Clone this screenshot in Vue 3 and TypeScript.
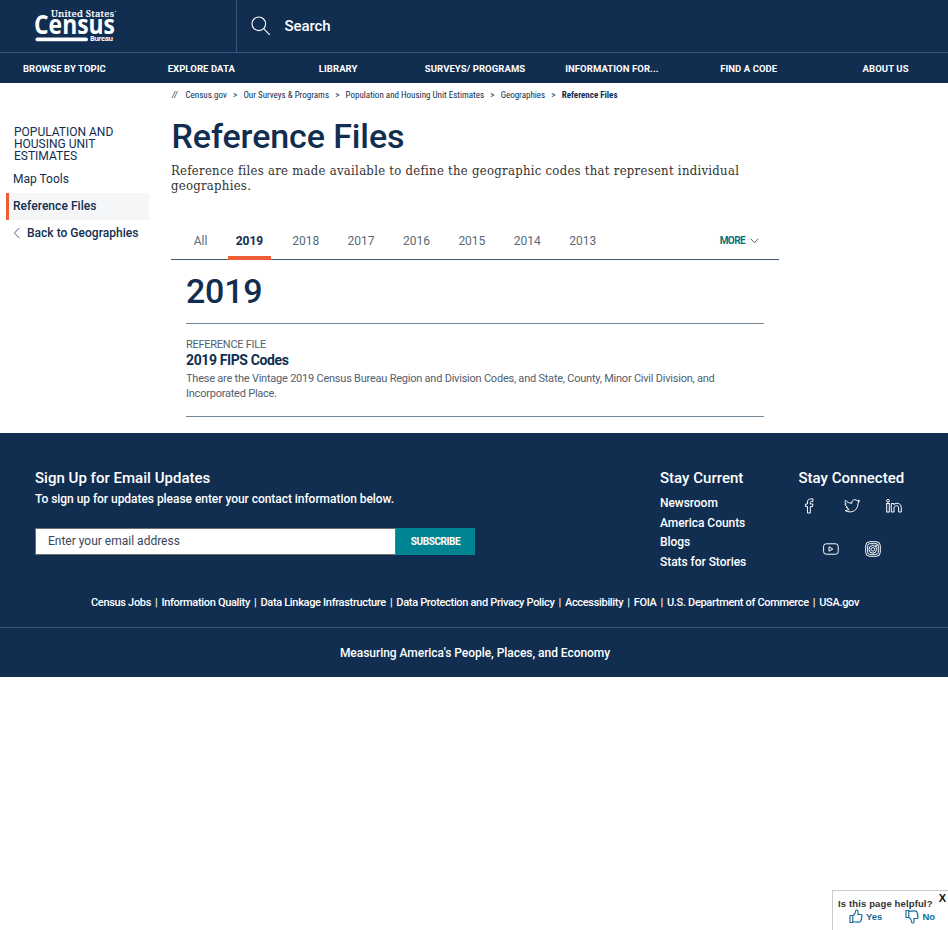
<script setup lang="ts">
const topics = ['BROWSE BY TOPIC', 'EXPLORE DATA', 'LIBRARY', 'SURVEYS/ PROGRAMS', 'INFORMATION FOR...', 'FIND A CODE', 'ABOUT US']
const crumbs = ['Census.gov', 'Our Surveys & Programs', 'Population and Housing Unit Estimates', 'Geographies']
const years = ['All', '2019', '2018', '2017', '2016', '2015', '2014', '2013']
const current = ['Newsroom', 'America Counts', 'Blogs', 'Stats for Stories']
const legal = ['Census Jobs', 'Information Quality', 'Data Linkage Infrastructure', 'Data Protection and Privacy Policy', 'Accessibility', 'FOIA', 'U.S. Department of Commerce', 'USA.gov']
</script>

<template>
  <div class="page">
    <header class="header">
      <div class="masthead">
        <a class="brand">
          <svg width="84" height="36" viewBox="0 0 84 36">
            <text class="l-top" x="16" y="9" textLength="63">United States</text>
            <text class="l-main" x="-1" y="26" textLength="81" lengthAdjust="spacingAndGlyphs">Census</text>
            <rect x="0.5" y="29.500" width="52.500" height="3.800" rx="1.900" fill="#fff" />
            <text class="l-sub" x="55" y="33.200" textLength="23">Bureau</text>
            <circle cx="80.500" cy="3.200" r=".7" fill="#a9b5c5" />
          </svg>
        </a>
        <div class="search">
          <svg width="20" height="20" viewBox="0 0 20 20" fill="none" stroke="#fff" stroke-width="1.1">
            <circle cx="7.800" cy="7.800" r="6.800" /><path d="M12.700 12.700L18.800 18.800" />
          </svg>
          <span>Search</span>
        </div>
      </div>
      <nav class="topics"><a v-for="t in topics" :key="t">{{ t }}</a></nav>
    </header>

    <div class="body">
      <aside class="side">
        <h2>POPULATION AND HOUSING UNIT ESTIMATES</h2>
        <a class="side-link">Map Tools</a>
        <a class="side-link on"><span>Reference Files</span></a>
        <a class="side-link back">
          <svg width="8" height="12" viewBox="0 0 8 12" fill="none" stroke="#47607f"><path d="M6.500 1L1.300 6l5.200 5" /></svg>
          <span>Back to Geographies</span>
        </a>
      </aside>
      <main class="main">
        <div class="crumbs">
          <span class="slashes">//</span>
          <template v-for="c in crumbs" :key="c"><a>{{ c }}</a><i>&gt;</i></template>
          <b>Reference Files</b>
        </div>
        <h1>Reference Files</h1>
        <p class="lead">Reference files are made available to define the geographic codes that represent individual<br />geographies.</p>
        <div class="tabs">
          <a v-for="y in years" :key="y" :class="{ on: y === '2019', all: y === 'All' }">{{ y }}</a>
          <div class="more"><span>MORE</span>
            <svg width="9" height="6" viewBox="0 0 9 6" fill="none" stroke="#52677f"><path d="M.8.8l3.700 4 3.700-4" /></svg>
          </div>
        </div>
        <section class="list">
          <h2>2019</h2>
          <article>
            <div class="kind">REFERENCE FILE</div>
            <h3>2019 FIPS Codes</h3>
            <p>These are the Vintage 2019 Census Bureau Region and Division Codes, and State, County, Minor Civil Division, and Incorporated Place.</p>
          </article>
        </section>
      </main>
    </div>

    <footer class="footer">
      <div class="foot-top">
        <div class="signup">
          <h4>Sign Up for Email Updates</h4>
          <p>To sign up for updates please enter your contact information below.</p>
          <div class="form"><div class="field">Enter your email address</div><button>SUBSCRIBE</button></div>
        </div>
        <div class="stay">
          <h4>Stay Current</h4>
          <a v-for="c in current" :key="c">{{ c }}</a>
        </div>
        <div class="connect">
          <h4>Stay Connected</h4>
          <div class="icons">
            <svg width="16" height="16" viewBox="0 0 16 16"><path d="M5.500 15V8.600H3.600V6h1.900V4c0-2 1.300-3.100 3.200-3.100h2.200v2.600H9.400c-.8 0-1.100.4-1.100 1.100V6h2.600l-.4 2.600H8.300V15z" /></svg>
            <svg width="16" height="16" viewBox="0 0 16 16"><path d="M1.500 2.200c1.600 1.900 3.700 3 6.300 3.100-.3-2.200 1.100-3.600 3-3.600 1 0 1.800.4 2.400 1.100l2-.8-1 1.800 1.200-.3-1.400 1.600c.1 5.100-3.300 8.800-7.900 8.800-2 0-3.700-.5-5.100-1.400 1.600.1 3-.3 4.200-1.200-1.500-.2-2.500-1-2.900-2.200h1.200C2 8.400 1.100 7.300 1 5.800l1.300.3C.9 5 .7 3.500 1.500 2.200z" /></svg>
            <svg width="16" height="16" viewBox="0 0 16 16"><rect x=".7" y="5.500" width="2.600" height="8.500" /><circle cx="2" cy="2.800" r="1.400" /><path d="M5.300 5.500h2.500v1.200c.7-.9 1.600-1.400 3-1.400 3 0 4.500 1.700 4.500 4.400V14h-2.700v-4c0-1.500-.7-2.300-2.100-2.300S8 8.600 8 10v4H5.300z" /></svg>
          </div>
          <div class="icons two">
            <svg width="16" height="16" viewBox="0 0 16 16"><rect x=".6" y="2.800" width="14.600" height="10.400" rx="2.600" /><path d="M6 5.800v4.400l3.800-2.200z" /></svg>
            <svg width="16" height="16" viewBox="0 0 16 16"><rect x=".7" y=".7" width="14.600" height="14.600" rx="4" /><rect x="2.700" y="2.700" width="10.600" height="10.600" rx="2" /><circle cx="7.800" cy="8.300" r="3.800" /><circle cx="7.800" cy="8.300" r="1.800" /><circle cx="11.400" cy="4.600" r=".7" /></svg>
          </div>
        </div>
      </div>
      <div class="legal"><template v-for="(l, i) in legal" :key="l"><i v-if="i">|</i><a>{{ l }}</a></template></div>
      <div class="motto">Measuring America's People, Places, and Economy</div>
    </footer>

    <div class="helpful">
      <b class="close">X</b>
      <div class="question">Is this page helpful?</div>
      <div class="votes">
        <a><svg width="14" height="15" viewBox="0 0 14 15"><path d="M1 6.500h2.800v7H1zM3.800 7C5.700 5.400 6.700 4 6.900 1.200c1.700-.6 2.800.9 2 4.300h3.300c1.100.2 1.100 1.600.4 2 .6.500.5 1.500-.2 1.900.5.600.2 1.500-.5 1.800.3.700-.1 1.500-1 1.700-2.900.5-5 .2-7.100-.4" /></svg><span>Yes</span></a>
        <a><svg width="14" height="15" viewBox="0 0 14 15"><path d="M1 1.500h2.800v7H1zM3.800 8c1.900 1.600 2.900 3 3.100 5.800 1.700.6 2.800-.9 2-4.300h3.300c1.100-.2 1.100-1.600.4-2 .6-.5.5-1.500-.2-1.900.5-.6.2-1.500-.5-1.800.3-.7-.1-1.500-1-1.700-2.900-.5-5-.2-7.100.4" /></svg><span>No</span></a>
      </div>
    </div>
  </div>
</template>

<style>
body { background: #fff; overflow: hidden; }
</style>

<style scoped>
* { box-sizing: border-box; }
h1, h2, h3, h4, p { margin: 0; font-weight: 500; }
.page { width: 948px; height: 930px; font-family: Roboto, "Liberation Sans", sans-serif; color: #112e51; overflow: hidden; }
.header { height: 83px; background: #112e51; color: #fff; }
.masthead { display: flex; height: 53px; border-bottom: 1px solid #3a557b; }
.brand { width: 237px; border-right: 1px solid #3a557b; padding: 8px 0 0 35px; }
.brand svg { display: block; overflow: visible; }
.l-top { font: 500 9.500px "Noto Serif", "DejaVu Serif", serif; fill: #fff; stroke: #fff; stroke-width: .2; }
.l-main { font: 700 26px "Open Sans", sans-serif; fill: #fff; }
.l-sub { font: 700 7px "Open Sans", sans-serif; fill: #fff; }
.search { display: flex; align-items: center; gap: 14px; padding-left: 13.500px; font-size: 15px; font-weight: 500; letter-spacing: -.1px; }
.topics { display: flex; width: 958px; margin-left: -4px; height: 30px; line-height: 32px; font-size: 9.500px; font-weight: 700; text-align: center; letter-spacing: .08px; }
.topics a { flex: 1; }
.body { display: flex; height: 350px; }
.side { width: 149px; padding: 43px 0 0 6px; margin-right: 22px; font-size: 12px; }
.side h2 { font-size: 12px; line-height: 12px; padding: 0 10px 0 8px; font-weight: 400; height: 40px; }
.side-link { display: flex; align-items: center; height: 27px; padding: 0 0 2px 7px; font-size: 12px; }
.side-link.on { border-left: 3px solid #ef5d37; padding-left: 4px; background: #f5f6f8; font-weight: 500; letter-spacing: .05px; }
.side-link.back { font-weight: 500; letter-spacing: .02px; }
.back svg { margin-right: 6px; }
.main { width: 608px; }
.crumbs { display: flex; height: 24px; line-height: 24px; font-size: 9px; white-space: nowrap; font-stretch: 75%; padding-left: 1px; }
.crumbs i { font-style: normal; margin: 0 6.200px; }
.slashes { margin-right: 8px; font-style: italic; }
h1 { font-size: 34px; line-height: 40px; margin: 9px 0 0 .5px; letter-spacing: -.1px; }
.lead { font: 13px/15px "DejaVu Serif Condensed", "DejaVu Serif", serif; letter-spacing: .27px; margin-top: 7px; height: 48px; color: #333; white-space: nowrap; }
.tabs { display: flex; height: 49px; border-bottom: 1px solid #42576d; font-size: 12px; line-height: 30px; color: #5b6876; }
.list { padding: 11px 15px 0; }
.list h2 { font-size: 34px; line-height: 40px; height: 53px; border-bottom: 1px solid #758797; letter-spacing: -.2px; }
.tabs a { width: 55.400px; text-align: center; padding-top: 15px; height: 49px; }
.tabs a.all { width: 43px; margin-left: 8px; }
.tabs a.on { width: 43px; margin: 0 7px 0 6px; font-weight: 700; color: #112e51; border-bottom: 4px solid #ef5d37; }
.more { margin-left: auto; display: flex; align-items: center; gap: 5px; height: 30px; margin-top: 15px; margin-right: 20px; color: #007780; font-size: 10px; font-weight: 700; letter-spacing: -.6px; }
article { height: 93px; padding-top: 13px; border-bottom: 1px solid #758797; color: #53606e; }
.kind { font-size: 11px; height: 15px; line-height: 16px; letter-spacing: -.26px; }
article h3 { font-size: 14px; line-height: 16px; font-weight: 700; color: #112e51; letter-spacing: -.38px; }
article p { font-size: 11px; line-height: 15px; margin-top: 3px; font-weight: 400; letter-spacing: -.228px; }
.footer { height: 244px; background: #112e51; color: #fff; font-size: 12px; font-weight: 500; }
.foot-top { display: flex; height: 158px; padding: 36px 35px 0; }
h4 { font-size: 15px; line-height: 18px; letter-spacing: .02px; }
.signup { width: 625px; }
.signup p { font-size: 12px; line-height: 16px; margin-top: 4px; letter-spacing: -.043px; }
.form { display: flex; width: 440px; height: 27px; margin-top: 21px; }
.field { width: 361px; background: #fff; border: 1px solid #736f6d; color: #38465a; padding-left: 12px; line-height: 24px; font-weight: 400; }
button { flex: 1; border: 0; background: #008392; color: #fff; font: 700 10px Roboto, sans-serif; padding: 0; letter-spacing: -.4px; }
.stay { width: 138.500px; display: flex; flex-direction: column; line-height: 19.600px; letter-spacing: -.05px; }
.stay h4 { margin-bottom: 7px; }
.connect { white-space: nowrap; }
.icons { display: flex; gap: 26px; margin: 11px 0 0 3px; }
.icons.two { margin: 27px 0 0 24px; }
.icons svg { fill: none; stroke: #fff; stroke-width: 1; }
.legal { height: 37px; line-height: 24px; display: flex; justify-content: center; padding-left: 2px; font-size: 11px; letter-spacing: -.32px; border-bottom: 1px solid #3a557b; white-space: nowrap; }
.legal i { font-style: normal; margin: 0 4px; }
.motto { line-height: 51px; text-align: center; padding-left: 2px; letter-spacing: -.04px; }
.helpful { position: absolute; right: 0; bottom: 0; width: 116px; height: 40px; border: 1px solid #ccc; border-width: 1px 0 0 1px; background: #fff; font: 700 9.500px "Liberation Sans", sans-serif; color: #333; padding: 7px 0 0 5px; }
.close { position: absolute; right: 2px; top: 1px; font-size: 11px; color: #111; }
.question { line-height: 12px; white-space: nowrap; letter-spacing: .13px; }
.votes { display: flex; gap: 23px; padding-left: 11px; margin-top: -1px; color: #146a93; }
.votes a { display: flex; align-items: center; gap: 3px; }
.votes svg { fill: none; stroke: #146a93; stroke-width: 1.1; }
</style>
